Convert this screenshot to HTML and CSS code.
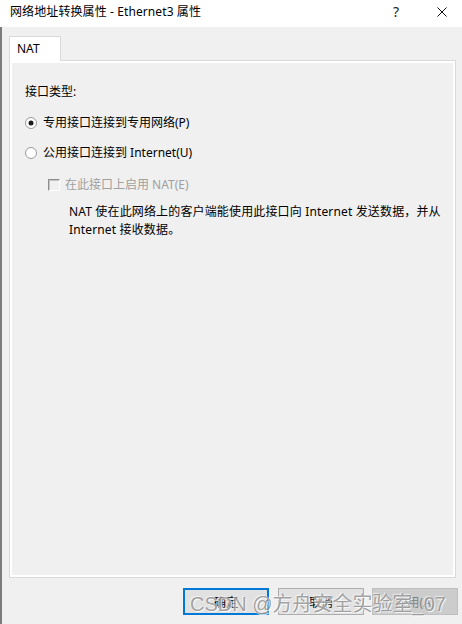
FILE: index.html
```html
<!DOCTYPE html>
<html lang="zh-CN">
<head>
<meta charset="utf-8">
<title>网络地址转换属性 - Ethernet3 属性</title>
<link rel="stylesheet" href="styles.css">
</head>
<body>
<div class="window">
  <div class="titlebar">
    <span class="title">网络地址转换属性 - Ethernet3 属性</span>
    <span class="help">?</span>
    <svg class="close" width="10" height="10" viewBox="0 0 10 10"><path d="M0.5 0.5 L9.5 9.5 M9.5 0.5 L0.5 9.5" stroke="#111" stroke-width="1" fill="none"/></svg>
  </div>
  <div class="client">
    <div class="tabs">
      <div class="tab">NAT</div>
    </div>
    <div class="panel">
      <div class="row label">接口类型:</div>
      <div class="row radio-row r1">
        <svg class="radio" width="12" height="12" viewBox="0 0 12 12"><circle cx="6" cy="6" r="5.5" fill="#fff" stroke="#9a9a9a"/><circle cx="6" cy="6" r="2.5" fill="#1a1a1a"/></svg>
        <span>专用接口连接到专用网络(P)</span>
      </div>
      <div class="row radio-row r2">
        <svg class="radio" width="12" height="12" viewBox="0 0 12 12"><circle cx="6" cy="6" r="5.5" fill="#fff" stroke="#9a9a9a"/></svg>
        <span>公用接口连接到 Internet(U)</span>
      </div>
      <div class="row check-row">
        <span class="checkbox"></span>
        <span class="disabled">在此接口上启用 NAT(E)</span>
      </div>
      <div class="desc">NAT 使在此网络上的客户端能使用此接口向 Internet 发送数据，并从<br>Internet 接收数据。</div>
    </div>
    <div class="buttons">
      <div class="btn default">确定</div>
      <div class="btn">取消</div>
      <div class="btn off">应用(A)</div>
    </div>
  </div>
  <div class="watermark">CSDN @方舟安全实验室_07</div>
</div>
</body>
</html>
```
FILE: styles.css
```css
html, body {
  margin: 0;
  padding: 0;
  background: #f0f0f0;
}
.window {
  position: relative;
  width: 462px;
  height: 624px;
  display: flex;
  flex-direction: column;
  font-family: "Noto Sans", "Noto Sans CJK SC", sans-serif;
  font-size: 12px;
  color: #000;
  overflow: hidden;
}
.titlebar {
  height: 27px;
  flex: none;
  background: #fff;
  display: flex;
  align-items: flex-start;
  box-sizing: border-box;
  padding-left: 10px;
}
.title {
  flex: 1;
  line-height: 24px;
  letter-spacing: 0.1px;
}
.help {
  font-family: "Noto Sans", sans-serif;
  font-size: 14px;
  line-height: 24px;
  color: #222;
  margin-right: 38px;
}
.close {
  margin-top: 7px;
  margin-right: 15px;
}
.client {
  flex: 1;
  background: #f0f0f0;
  border-left: 2px solid #7c7c7c;
  padding: 9px 6px 0 7px;
  display: flex;
  flex-direction: column;
}
.tabs {
  height: 24px;
  display: flex;
  align-items: flex-start;
}
.tab {
  position: relative;
  z-index: 1;
  height: 24px;
  width: 43px;
  background: #fff;
  border: 1px solid #d9d9d9;
  border-bottom: none;
  padding-left: 7px;
  line-height: 23px;
}
.panel {
  border: 1px solid #d9d9d9;
  box-shadow: inset 0 0 0 2px #fff;
  background: #f0f0f0;
  padding: 22px 15px 0 15px;
  height: 494px;
}
.row {
  height: 18px;
  line-height: 18px;
  display: flex;
  align-items: center;
}
.r1 { margin-top: 13px; }
.r2 { margin-top: 12px; }
.radio {
  flex: none;
  margin-right: 6px;
}
.check-row {
  margin-top: 14px;
  padding-left: 23px;
}
.checkbox {
  width: 10px;
  height: 10px;
  border-top: 1px solid #8e8e8e;
  border-left: 1px solid #8e8e8e;
  border-right: 1px solid #fdfdfd;
  border-bottom: 1px solid #fdfdfd;
  box-shadow: inset 1px 1px 0 #c4c4c4;
  background: #f0f0f0;
  margin-right: 5px;
}
.disabled {
  color: #a0a0a0;
}
.desc {
  margin-top: 9px;
  padding-left: 44px;
  line-height: 18px;
  white-space: nowrap;
  letter-spacing: 0.15px;
}
.buttons {
  margin-top: 10px;
  margin-right: -2px;
  display: flex;
  justify-content: flex-end;
  gap: 8px;
}
.btn {
  width: 86px;
  height: 27px;
  box-sizing: border-box;
  background: #e1e1e1;
  border: 1px solid #adadad;
  display: flex;
  align-items: center;
  justify-content: center;
}
.btn.default {
  border: 2px solid #0078d7;
  margin-right: 1px;
}
.btn.off {
  background: #cccccc;
  border-color: #bfbfbf;
  color: #838383;
}
.watermark {
  position: absolute;
  left: 190px;
  top: 594px;
  font-family: "Liberation Sans", "Noto Sans CJK SC", sans-serif;
  font-size: 20px;
  line-height: 20px;
  color: rgba(140, 140, 140, 0.8);
  text-shadow: 1px 1px 1px rgba(255, 255, 255, 0.9), -1px -1px 1px rgba(255, 255, 255, 0.6);
  white-space: nowrap;
  pointer-events: none;
}
```
